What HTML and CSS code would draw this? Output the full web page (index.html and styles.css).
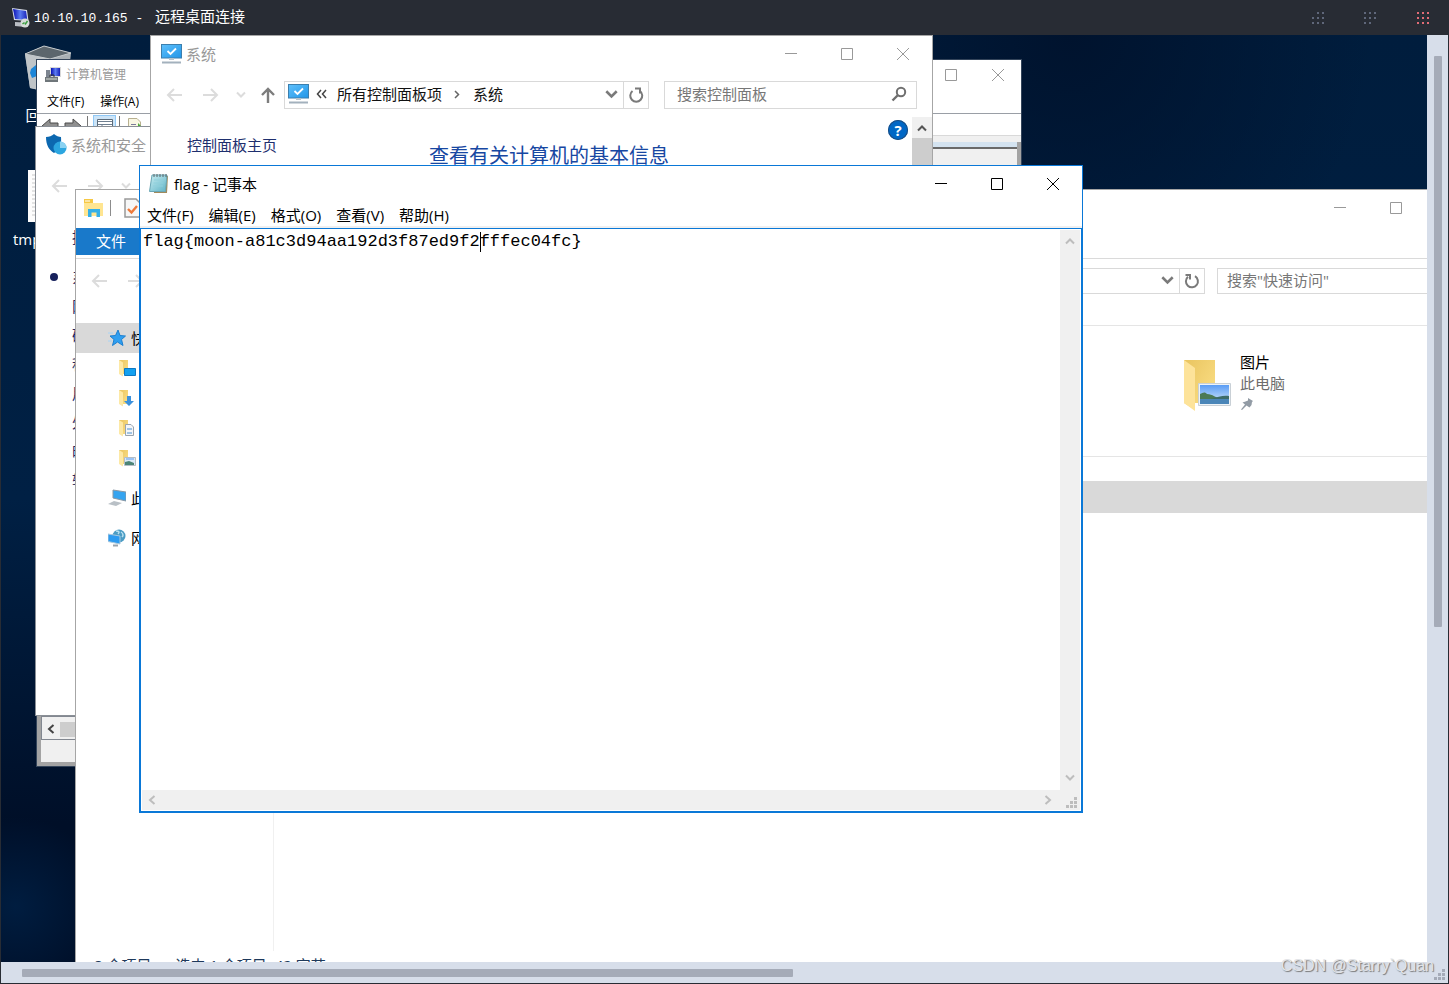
FILE: index.html
```html
<!DOCTYPE html>
<html lang="zh-CN">
<head>
<meta charset="utf-8">
<meta name="viewport" content="width=device-width, initial-scale=1">
<title>10.10.10.165 - 远程桌面连接</title>
<link rel="stylesheet" href="styles.css">
</head>
<body>
<svg class="sprite" aria-hidden="true">
  <defs>
    <linearGradient id="gScreen" x1="0" y1="0" x2="1" y2="1"><stop offset="0" stop-color="#5fc0fb"/><stop offset="1" stop-color="#2196e8"/></linearGradient>
    <linearGradient id="gFolder" x1="0" y1="0" x2="1" y2="1"><stop offset="0" stop-color="#e9c45f"/><stop offset="1" stop-color="#fde28a"/></linearGradient>
    <linearGradient id="gBlue" x1="0" y1="0" x2="1" y2="0"><stop offset="0" stop-color="#0a10b4"/><stop offset="0.5" stop-color="#5b7bf0"/><stop offset="1" stop-color="#1720b8"/></linearGradient>
    <linearGradient id="gPad" x1="0" y1="0" x2="1" y2="1"><stop offset="0" stop-color="#c9eef2"/><stop offset="1" stop-color="#5fb3c6"/></linearGradient>
    <linearGradient id="gSky" x1="0" y1="0" x2="0" y2="1"><stop offset="0" stop-color="#5a9cf5"/><stop offset="1" stop-color="#d8ecfb"/></linearGradient>
    <symbol id="min" viewBox="0 0 12 12"><path d="M0 5.500H12" stroke="currentColor"/></symbol>
    <symbol id="max" viewBox="0 0 12 12"><path d="M.5 .5H11.500V11.500H.5Z" fill="none" stroke="currentColor"/></symbol>
    <symbol id="close" viewBox="0 0 12 12"><path d="M0 0L12 12M12 0L0 12" stroke="currentColor"/></symbol>
    <symbol id="up" viewBox="0 0 10 10"><path d="M1 7.500L5 3.500L9 7.500" fill="none" stroke="currentColor" stroke-width="2"/></symbol>
    <symbol id="down" viewBox="0 0 10 10"><path d="M1 2.500L5 6.500L9 2.500" fill="none" stroke="currentColor" stroke-width="2"/></symbol>
    <symbol id="left" viewBox="0 0 10 10"><path d="M7.500 1L3 5L7.500 9" fill="none" stroke="currentColor" stroke-width="2"/></symbol>
    <symbol id="right" viewBox="0 0 10 10"><path d="M2.500 1L7 5L2.500 9" fill="none" stroke="currentColor" stroke-width="2"/></symbol>
    <symbol id="back" viewBox="0 0 16 16"><path d="M16 8H2M8 2L2 8L8 14" fill="none" stroke="currentColor" stroke-width="2"/></symbol>
    <symbol id="fwd" viewBox="0 0 16 16"><path d="M0 8H14M8 2L14 8L8 14" fill="none" stroke="currentColor" stroke-width="2"/></symbol>
    <symbol id="parent" viewBox="0 0 16 16"><path d="M8 16V2M2 8L8 2L14 8" fill="none" stroke="currentColor" stroke-width="2.400"/></symbol>
    <symbol id="reload" viewBox="0 0 16 16"><path d="M11 3.200A6 6 0 1 1 4 3.800" fill="none" stroke="currentColor" stroke-width="2"/><path d="M1.500 2H6V6.500" fill="none" stroke="currentColor" stroke-width="2"/></symbol>
    <symbol id="reload-cw" viewBox="0 0 16 16"><path d="M4.500 4A6 6 0 1 0 12 4" fill="none" stroke="currentColor" stroke-width="2"/><path d="M7 1.500H12V6.500" fill="none" stroke="currentColor" stroke-width="2"/></symbol>
    <symbol id="lens" viewBox="0 0 16 16"><circle cx="10" cy="6" r="4.200" fill="none" stroke="currentColor" stroke-width="2"/><path d="M7 9L1.500 14.500" stroke="currentColor" stroke-width="2.400"/></symbol>
    <symbol id="grip" viewBox="0 0 11 11"><path d="M8 0h3v3h-3zM4 4h3v3h-3zM8 4h3v3h-3zM0 8h3v3h-3zM4 8h3v3h-3zM8 8h3v3h-3z" fill="currentColor"/></symbol>
    <symbol id="monitor" viewBox="0 0 21 20"><rect x=".5" y=".5" width="20" height="13.500" fill="url(#gScreen)" stroke="#3c7fae"/><path d="M6.500 7L9.500 10L15 4.500" fill="none" stroke="#fff" stroke-width="1.800"/><path d="M8 14H13V16H8Z" fill="#b8c4cc"/><path d="M1 17.500H20V19.500H1Z" fill="#a3b1bd"/></symbol>
    <symbol id="folder" viewBox="0 0 18 18"><path d="M1 1H10V15H5L5 17L1 14.500Z" fill="url(#gFolder)"/><path d="M1 1L5 3.500V17.500L1 15Z" fill="#fde9a6"/></symbol>
  </defs>
</svg>

<div class="rdp">
  <header class="rdp-bar">
    <svg class="rdp-logo" viewBox="0 0 20 20"><path d="M2 0L17 2L18.500 13L4 12Z" fill="#d5dbe6"/><path d="M3 1L16 3L17.300 12L5 11Z" fill="url(#gBlue)"/><path d="M5 14L14 14.500L15 19L5 18Z" fill="#b9bdc4"/><circle cx="15" cy="15" r="4.500" fill="#d6dbd8"/><path d="M12.500 16L14.500 14.500M15 16.500L17.500 13" stroke="#3a9d3f" stroke-width="1.500"/></svg>
    <h1 class="rdp-title"><span class="rdp-host">10.10.10.165 - </span>远程桌面连接</h1>
    <div class="rdp-controls">
      <button class="rdp-btn" aria-label="最小化"><svg viewBox="0 0 12 12"><path d="M5 0h2v2H5zM10 0h2v2h-2zM0 5h2v2H0zM5 5h2v2H5zM10 5h2v2h-2zM0 10h2v2H0zM5 10h2v2H5zM10 10h2v2h-2z" fill="currentColor"/></svg></button>
      <button class="rdp-btn" aria-label="最大化"><svg viewBox="0 0 12 12"><path d="M0 0h2v2H0zM5 0h2v2H5zM10 0h2v2h-2zM0 5h2v2H0zM5 5h2v2H5zM10 5h2v2h-2zM0 10h2v2H0zM5 10h2v2H5z" fill="currentColor"/></svg></button>
      <button class="rdp-btn rdp-btn-close" aria-label="关闭"><svg viewBox="0 0 12 12"><path d="M0 0h2v2H0zM5 0h2v2H5zM10 0h2v2h-2zM0 5h2v2H0zM5 5h2v2H5zM10 5h2v2h-2zM0 10h2v2H0zM5 10h2v2H5zM10 10h2v2h-2z" fill="currentColor"/></svg></button>
    </div>
  </header>

  <main class="desktop">
    <div class="desk-icon desk-bin">
      <svg viewBox="0 0 48 48" width="48" height="48"><path d="M1 9L20 1L47 8L43 44L24 47L6 43Z" fill="#a9b0b5"/><path d="M1 9L20 1L47 8L26 14Z" fill="#5c666d" stroke="#c5cacd"/><path d="M1 9L26 14L24 47L6 43Z" fill="#c0c5c8"/><path d="M7 24L12 20L16 25L13 26V31L8 33L6 28Z" fill="#1c86d8"/></svg>
      <span class="desk-label">回收站</span>
    </div>
    <div class="desk-icon desk-tmp">
      <svg viewBox="0 0 40 52" width="40" height="52"><path d="M0 0H40V52H0Z" fill="#fdfdfd"/><path d="M4 5H36M4 9H36M4 13H36M4 17H36M4 21H36M4 25H36M4 29H36M4 33H36M4 37H36M4 41H36M4 45H36" stroke="#c9c9c9"/></svg>
      <span class="desk-label">tmp</span>
    </div>

    <section class="win manage" aria-label="计算机管理">
      <div class="titlebar manage-title">
        <svg viewBox="0 0 16 16" width="16" height="16"><rect x="5" y="0" width="11" height="10" fill="#d8d8d8"/><rect x="6" y="1" width="9" height="8" fill="url(#gBlue)"/><path d="M1 3H5V10H1Z" fill="#7d8590"/><path d="M0 10H13V15H0Z" fill="#6f767a"/><path d="M1 12H12" stroke="#d9dcd4"/><path d="M5 10V8H9V10" fill="none" stroke="#333"/></svg>
        <span class="title-text">计算机管理</span>
        <div class="controls">
          <button aria-label="最小化"><svg><use href="#min"/></svg></button>
          <button aria-label="最大化"><svg><use href="#max"/></svg></button>
          <button aria-label="关闭"><svg><use href="#close"/></svg></button>
        </div>
      </div>
      <div class="menubar manage-menu"><button>文件(F)</button><button>操作(A)</button></div>
      <div class="manage-tools">
        <svg viewBox="0 0 18 16" width="18" height="16"><path d="M1 8L9 1V5H17V11H9V15Z" fill="#8f8f8f" stroke="#4a4a4a"/></svg>
        <svg viewBox="0 0 18 16" width="18" height="16"><path d="M17 8L9 1V5H1V11H9V15Z" fill="#8f8f8f" stroke="#4a4a4a"/></svg>
        <i class="tool-sep"></i>
        <span class="tool-on"><svg viewBox="0 0 16 14" width="16" height="14"><path d="M.5 .5H15.500V13.500H.5Z" fill="#fff" stroke="#5c6a78"/><path d="M1 2.500H15M1 5.500H15" stroke="#6f7f90"/><path d="M5 6V13" stroke="#6f7f90"/></svg></span>
        <i class="tool-sep"></i>
        <svg class="tool-doc" viewBox="0 0 14 16" width="14" height="16"><path d="M.5 .5H9L12.500 4V15.500H.5Z" fill="#f9f7e3" stroke="#b8b090"/><path d="M3 6.500H8" stroke="#7b7b9b"/><path d="M10 5L14 9L10 13Z" fill="#4daa3c"/></svg>
        <i class="tool-sep"></i>
      </div>
      <div class="manage-frame">
        <div class="manage-pane"></div>
        <div class="manage-scroll"><svg class="chev"><use href="#left"/></svg><span class="manage-thumb"></span></div>
        <div class="manage-status"></div>
      </div>
    </section>

    <section class="win security" aria-label="系统和安全">
      <div class="titlebar">
        <svg viewBox="0 0 22 21" width="22" height="21"><path d="M8 0C10 2 13 3 15 3C16 12 12 17 8 19C3 16 0 11 0 3C3 3 6 2 8 0Z" fill="#0c68b0"/><circle cx="14" cy="14" r="6.500" fill="#2ca6e0"/><path d="M14 14V7.500A6.500 6.500 0 0 1 20.500 14Z" fill="#8ad2f2"/></svg>
        <span class="title-text">系统和安全</span>
      </div>
      <div class="navrow">
        <svg class="nav-arrow"><use href="#back"/></svg><svg class="nav-arrow"><use href="#fwd"/></svg><svg class="chev nav-more"><use href="#down"/></svg>
      </div>
      <div class="cats">
        <a class="cat-home" href="#">控制面板主页</a>
        <ul class="cat-list">
          <li class="cat-now"><a href="#">系统和安全</a></li>
          <li><a href="#">网络和 Internet</a></li>
          <li><a href="#">硬件和声音</a></li>
          <li><a href="#">程序</a></li>
          <li><a href="#">用户帐户</a></li>
          <li><a href="#">外观</a></li>
          <li><a href="#">时钟、语言和区域</a></li>
          <li><a href="#">轻松使用</a></li>
        </ul>
      </div>
    </section>

    <section class="win system" aria-label="系统">
      <div class="titlebar">
        <svg width="21" height="20"><use href="#monitor"/></svg>
        <span class="title-text">系统</span>
        <div class="controls">
          <button aria-label="最小化"><svg><use href="#min"/></svg></button>
          <button aria-label="最大化"><svg><use href="#max"/></svg></button>
          <button aria-label="关闭"><svg><use href="#close"/></svg></button>
        </div>
      </div>
      <div class="navrow">
        <svg class="nav-arrow"><use href="#back"/></svg><svg class="nav-arrow"><use href="#fwd"/></svg><svg class="chev nav-more"><use href="#down"/></svg><svg class="nav-arrow nav-up"><use href="#parent"/></svg>
        <div class="address">
          <svg width="21" height="20"><use href="#monitor"/></svg>
          <svg viewBox="0 0 12 10" width="12" height="10"><path d="M5 1L1.500 5L5 9M10 1L6.500 5L10 9" fill="none" stroke="#444" stroke-width="1.500"/></svg>
          <a href="#">所有控制面板项</a>
          <svg viewBox="0 0 6 10" width="6" height="10"><path d="M1 2L4.500 5.500L1 9" fill="none" stroke="#666" stroke-width="1.500"/></svg>
          <a href="#">系统</a>
          <button class="addr-drop" aria-label="历史记录"><svg><use href="#down"/></svg></button>
          <button class="addr-reload" aria-label="刷新"><svg><use href="#reload-cw"/></svg></button>
        </div>
        <label class="search"><input type="text" aria-label="搜索控制面板" placeholder="搜索控制面板"><svg><use href="#lens"/></svg></label>
      </div>
      <div class="system-body">
        <a class="system-home" href="#">控制面板主页</a>
        <h2 class="system-heading">查看有关计算机的基本信息</h2>
        <button class="help" aria-label="帮助">?</button>
        <div class="system-scroll"><svg class="chev"><use href="#up"/></svg><span class="system-thumb"></span></div>
      </div>
    </section>

    <section class="win explorer" aria-label="快速访问">
      <div class="titlebar">
        <svg viewBox="0 0 20 18" width="20" height="18"><path d="M0 1H9V4H19V17H0Z" fill="#ffe591"/><path d="M0 0H9V4H0Z" fill="#f6c844"/><path d="M1 2H6" stroke="#fff"/><path d="M4 18V10H16V18H12.500V13.500H7.500V18Z" fill="#35b0e8"/></svg>
        <i class="quick-sep"></i>
        <svg viewBox="0 0 17 20" width="17" height="20"><path d="M1 1H12L16 5V19H1Z" fill="#f7f7f7" stroke="#999" stroke-width="1.500"/><path d="M4 11L7.500 14.500L13 8" fill="none" stroke="#ee7a3b" stroke-width="2.400"/></svg>
        <div class="controls">
          <button aria-label="最小化"><svg><use href="#min"/></svg></button>
          <button aria-label="最大化"><svg><use href="#max"/></svg></button>
          <button aria-label="关闭"><svg><use href="#close"/></svg></button>
        </div>
      </div>
      <div class="ribbon"><button class="ribbon-file">文件</button></div>
      <div class="navrow">
        <svg class="nav-arrow"><use href="#back"/></svg><svg class="nav-arrow"><use href="#fwd"/></svg>
        <div class="address">
          <button class="addr-drop" aria-label="历史记录"><svg><use href="#down"/></svg></button>
          <button class="addr-reload" aria-label="刷新"><svg><use href="#reload"/></svg></button>
        </div>
        <label class="search"><input type="text" aria-label="搜索快速访问" placeholder='搜索"快速访问"'></label>
      </div>
      <div class="explorer-body">
        <nav class="tree">
          <a class="tree-item tree-on" href="#"><svg viewBox="0 0 18 18"><path d="M10 1L12 6.500L17.500 7L13.500 10.500L15 16.500L9.500 13L4.500 16.500L6 10.500L2 7L7.500 6.500Z" fill="#2f9ff0" stroke="#1c7fd0"/><path d="M0 4H5M0 12H4" stroke="#a8d4f5"/></svg>快速访问</a>
          <a class="tree-item tree-sub" href="#"><svg viewBox="0 0 18 18"><use href="#folder" width="18" height="18"/><path d="M6.500 9.500H17.500V16.500H6.500Z" fill="#12a0f0" stroke="#0b78c4"/></svg>桌面</a>
          <a class="tree-item tree-sub" href="#"><svg viewBox="0 0 18 18"><use href="#folder" width="18" height="18"/><path d="M9 7H13V12H16L11 17L6 12H9Z" fill="#3c91dc"/></svg>下载</a>
          <a class="tree-item tree-sub" href="#"><svg viewBox="0 0 18 18"><use href="#folder" width="18" height="18"/><path d="M7.500 5.500H13L15.500 8V16.500H7.500Z" fill="#f4f6f8" stroke="#9aa4ae"/><path d="M9 10H14M9 14H14" stroke="#4a90d0"/></svg>文档</a>
          <a class="tree-item tree-sub" href="#"><svg viewBox="0 0 18 18"><use href="#folder" width="18" height="18"/><path d="M6.500 8.500H17.500V16.500H6.500Z" fill="#dcebf7" stroke="#b5bec6"/><path d="M8 10H16" stroke="#5a9cf5"/><path d="M7 13L11 12L16 14V16H7Z" fill="#4d8577"/></svg>图片</a>
          <a class="tree-item tree-root" href="#"><svg viewBox="0 0 18 18"><path d="M5 1L18 3V12L5 9Z" fill="#35a4f0" stroke="#8a98a4"/><path d="M0 15L6 12L14 14L8 17Z" fill="#b9c0c6"/></svg>此电脑</a>
          <a class="tree-item tree-root" href="#"><svg viewBox="0 0 18 18"><circle cx="11" cy="7" r="6.500" fill="#4b9cc4"/><path d="M8 2C11 2 12 3 10 5M13 3C16 5 15 7 14 8" stroke="#b8e0f0" fill="none" stroke-width="1.500"/><path d="M0 5L12 7V15L0 12.500Z" fill="#2c9bf0" stroke="#a9c8dd"/><path d="M5 16.500H10" stroke="#9aa4ad" stroke-width="2"/></svg>网络</a>
        </nav>
        <div class="files">
          <div class="group-head"></div>
          <div class="tiles">
            <a class="tile" href="#">
              <svg viewBox="0 0 48 52" width="48" height="52"><path d="M1 1H32V44H12V51L1 44Z" fill="url(#gFolder)"/><path d="M1 1L12 9V52L1 44Z" fill="#fde39a"/><path d="M15.500 24.500H47.500V46.500H15.500Z" fill="#eef3f7" stroke="#c9d0d6"/><path d="M17 26H46V45H17Z" fill="url(#gSky)"/><path d="M17 35C20 34 21 32 24 35C30 35 32 39 40 40H17Z" fill="#4b7a55"/><path d="M28 40C35 38 40 36 46 37V41H28Z" fill="#3d6c6a"/><path d="M17 40H46V45H17Z" fill="#4b86b8"/></svg>
              <span class="tile-text"><span class="tile-name">图片</span><span class="tile-sub">此电脑</span>
              <svg viewBox="0 0 14 14" width="14" height="14"><path d="M8 1L13 4L12 5L11.500 8L9.500 10.500L6.500 8.500L2 13L1 12.500L5 7.500L2.500 5.500L5.500 4.500L8 3.500Z" fill="#929ba5"/></svg></span>
            </a>
          </div>
          <div class="recent-head"></div>
          <div class="recent-row"></div>
        </div>
      </div>
      <div class="status"><span>8 个项目</span><span>选中 1 个项目&nbsp; 42 字节</span></div>
    </section>

    <section class="win notepad" aria-label="flag - 记事本">
      <div class="titlebar">
        <svg viewBox="0 0 20 21" width="20" height="21"><path d="M4 3H19L18 20H5Z" fill="#a18a5c"/><path d="M3 2H18L16.500 18.500H.5Z" fill="url(#gPad)" stroke="#6aa6b4"/><path d="M5 1V4M8 1V4M11 1V4M14 1V4M17 1V4" stroke="#5b6468"/><path d="M5 7H15M4.500 10H14.500M4 13H14" stroke="#8fd0dc"/></svg>
        <span class="title-text">flag - 记事本</span>
        <div class="controls">
          <button aria-label="最小化"><svg><use href="#min"/></svg></button>
          <button aria-label="最大化"><svg><use href="#max"/></svg></button>
          <button aria-label="关闭"><svg><use href="#close"/></svg></button>
        </div>
      </div>
      <div class="menubar"><button>文件(F)</button><button>编辑(E)</button><button>格式(O)</button><button>查看(V)</button><button>帮助(H)</button></div>
      <div class="editor">
        <div class="sheet"><textarea aria-label="文本" spellcheck="false">flag{moon-a81c3d94aa192d3f87ed9f2fffec04fc}</textarea><i class="caret"></i></div>
        <div class="vbar"><svg class="chev"><use href="#up"/></svg><svg class="chev"><use href="#down"/></svg></div>
        <div class="hbar"><svg class="chev"><use href="#left"/></svg><svg class="chev"><use href="#right"/></svg></div>
        <div class="corner"><svg><use href="#grip"/></svg></div>
      </div>
    </section>
  </main>

  <div class="rdp-vbar"><span class="rdp-vthumb"></span></div>
  <div class="rdp-hbar"><span class="rdp-hthumb"></span></div>
  <div class="rdp-corner"><svg><use href="#grip"/></svg></div>
  <div class="watermark">CSDN @Starry`Quan</div>
</div>
</body>
</html>
```
FILE: styles.css
```css
* { box-sizing: border-box; }
html, body { height: 100%; }
body {
  margin: 0;
  font: 15px/20px "Open Sans", "Noto Sans CJK SC", sans-serif;
  color: #000;
}
button, input, textarea { font: inherit; color: inherit; margin: 0; padding: 0; border: 0; background: none; }
a { color: inherit; text-decoration: none; }
svg { display: block; flex: none; }
.sprite { position: absolute; width: 0; height: 0; }

/* Remote desktop frame */
.rdp {
  position: relative;
  height: 100vh;
  display: grid;
  grid-template: 35px minmax(0, 1fr) 21px / minmax(0, 1fr) 21px;
  padding: 0 1px 1px;
  background: #282c34;
  overflow: hidden;
}
.rdp-bar { grid-column: 1 / 3; display: flex; align-items: center; padding: 0 11px 0 9px; color: #fff; }
.rdp-logo { width: 20px; height: 20px; margin-right: 4px; }
.rdp-title { margin: 0; font: 15px/20px "Noto Sans CJK SC", sans-serif; white-space: pre; }
.rdp-host { margin-right: 4px; font: 13px/20px "Liberation Mono", monospace; }
.rdp-controls { display: flex; margin-left: auto; }
.rdp-btn { width: 52px; height: 35px; display: grid; place-items: center; color: #5f677a; }
.rdp-btn:last-child { width: 28px; margin-left: 13px; }
.rdp-btn svg { width: 12px; height: 12px; }
.rdp-btn-close { color: #e06c75; }
.rdp-vbar, .rdp-hbar, .rdp-corner { background: #d7deea; display: flex; }
.rdp-vbar { grid-area: 2 / 2; flex-direction: column; align-items: center; padding-top: 21px; }
.rdp-vbar::after { content: ""; flex: 335; }
.rdp-vthumb { flex: 571; width: 8px; border-radius: 1px; background: #a5abb8; }
.rdp-hbar { grid-area: 3 / 1; align-items: center; padding-left: 21px; }
.rdp-hbar::after { content: ""; flex: 634; }
.rdp-hthumb { flex: 771; height: 8px; border-radius: 1px; background: #a5abb8; }
.rdp-corner { grid-area: 3 / 2; align-items: flex-end; justify-content: flex-end; padding: 3px; color: #a5abb8; }
.rdp-corner svg { width: 11px; height: 11px; }
.watermark {
  position: absolute;
  right: 15px;
  bottom: 8px;
  font: 16px/20px "Liberation Sans", sans-serif;
  color: #e2e4e8;
  text-shadow: 1px 1px 1px #777;
}

/* Desktop */
.desktop {
  position: relative;
  overflow: hidden;
  background:
    radial-gradient(circle at 15px 94%, #001d40 0, transparent 90px),
    radial-gradient(circle at 75% 0, #00132e 0, transparent 300px),
    linear-gradient(#001d3d, #002044 50%, #000f28 85%);
}
.desk-icon { position: absolute; color: #fff; display: flex; flex-direction: column; align-items: center; }
.desk-bin { left: 23px; top: 10px; gap: 12px; }
.desk-tmp { left: 12px; top: 135px; align-items: flex-start; gap: 7px; }
.desk-tmp svg { margin-left: 15px; }

/* Windows */
.win { position: absolute; display: flex; flex-direction: column; background: #fff; border: 1px solid #a6a6a6; }
.titlebar { flex: none; display: flex; align-items: center; height: 37px; padding: 0 1px 2px 9px; color: #999; }
.title-text { margin-left: 5px; white-space: nowrap; }
.controls { display: flex; align-self: stretch; margin-left: auto; }
.controls button { width: 56px; display: grid; place-items: center; }
.controls svg { width: 12px; height: 12px; }
.menubar { display: flex; align-items: center; gap: 15px; white-space: nowrap; }
.chev { width: 10px; height: 10px; }
.navrow { flex: none; display: flex; align-items: center; height: 43px; padding-left: 15px; color: #dcdcdc; }
.nav-arrow { width: 16px; height: 16px; margin-right: 21px; }
.nav-more { margin: 0 14px 0 -4px; }
.nav-up { color: #7d7d7d; margin-right: 8px; }
.address { display: flex; align-items: center; flex: 1; height: 28px; padding: 0 0 2px 3px; border: 1px solid #d9d9d9; color: #111; white-space: nowrap; }
.address button { display: grid; place-items: center; align-self: stretch; width: 25px; margin-bottom: -2px; color: #7a7a7a; }
.address .addr-drop { margin-left: auto; width: 24px; }
.address .addr-drop svg { width: 13px; height: 13px; }
.address .addr-reload { border-left: 1px solid #d9d9d9; }
.address .addr-reload svg { width: 16px; height: 16px; }
.search { display: flex; align-items: center; height: 28px; padding: 0 9px 2px; border: 1px solid #d9d9d9; color: #6f6f6f; }
.search input { flex: 1; min-width: 0; outline: 0; }
.search input::placeholder { color: #777; opacity: 1; }
.search svg { width: 16px; height: 16px; }

/* Computer management */
.manage { left: 35px; right: 405px; top: 24px; bottom: 195px; border-color: #33445a; font-size: 12px; }
.manage-title { height: 29px; padding: 0 0 0 8px; }
.manage .controls button { width: 47px; }
.manage-menu { flex: none; height: 24px; padding: 2px 0 0 10px; gap: 16px; }
.manage-tools { flex: none; display: flex; align-items: center; gap: 5px; height: 23px; padding: 2px 0 0 4px; border-top: 1px solid #9a9fa6; border-bottom: 1px solid #d9d9d9; }
.tool-sep { width: 1px; height: 20px; background: #777; }
.tool-on { display: grid; place-items: center; width: 23px; height: 21px; margin-right: -2px; background: #cce4f7; border: 1px solid #90c8f6; }
.tool-doc { margin: 0 3px; }
.manage-frame { flex: 1; display: flex; flex-direction: column; margin-top: 6px; padding: 0 4px 4px; background: #a3a3a3; outline: 6px solid #f0f0f0; outline-offset: 0; clip-path: inset(-6px 0 0); }
.manage-pane { flex: 1; background: #f0f0f0; border-top: 5px solid #d4e3f0; box-shadow: inset 0 2px #6a6a6a; }
.manage-scroll { display: flex; align-items: center; height: 24px; padding: 2px 0 0 4px; gap: 4px; background: #f0f0f0; border: 1px solid #828790; color: #444; }
.manage-thumb { width: 200px; height: 15px; background: #cdcdcd; }
.manage-status { height: 22px; background: #f0f0f0; }

/* System and security */
.security { left: 34px; right: 600px; top: 91px; bottom: 246px; border-color: #8a8f96; }
.security .titlebar { padding-left: 10px; }
.security .title-text { margin-left: 3px; }
.cats { padding: 20px 0 0 36px; color: #25285f; }
.cat-home { display: block; }
.cat-list { margin: 16px 0 0; padding: 0; list-style: none; line-height: 29px; }
.cat-now::before { content: ""; float: left; width: 8px; height: 8px; margin: 10px 0 0 -22px; border-radius: 50%; background: #17215c; }

/* System */
.system { left: 149px; right: 494px; top: 0; bottom: 200px; }
.system .titlebar { padding-left: 10px; }
.system .title-text { margin-left: 4px; }
.system .address svg { margin-right: 7px; }
.system .address a { margin-right: 12px; }
.system .address button svg { margin: 0; }
.system .address > svg:nth-of-type(2) { margin-right: 9px; }
.system .address > svg:nth-of-type(3) { margin-right: 13px; }
.system .search { width: 253px; margin: 0 15px; padding-left: 12px; }
.system-body { flex: 1; display: flex; align-items: flex-start; padding: 1px 0 0 36px; }
.system-home { margin-top: 18px; color: #1e2f6e; }
.system-heading { margin: 25px auto 0 152px; font-size: 20px; line-height: 28px; font-weight: 400; color: #1747a2; white-space: nowrap; }
.help { width: 20px; height: 20px; margin: 3px 4px 0 0; border-radius: 50%; background: #0067c5; box-shadow: inset 0 0 0 1px #1d4d80; color: #fff; font-weight: 700; line-height: 20px; }
.system-scroll { align-self: stretch; display: flex; flex-direction: column; align-items: center; width: 20px; padding-top: 6px; gap: 5px; background: #f0f0f0; color: #555; }
.system-thumb { width: 20px; height: 200px; background: #cdcdcd; }

/* File explorer */
.explorer { left: 74px; right: -54px; top: 154px; bottom: -17px; }
.explorer .titlebar { height: 38px; padding: 0 0 2px 8px; }
.quick-sep { width: 1px; height: 16px; margin: 0 13px 0 6px; background: #8c8c8c; }
.ribbon { flex: none; display: flex; align-items: flex-start; height: 31px; border-bottom: 1px solid #dadada; }
.ribbon-file { width: 70px; height: 27px; padding-bottom: 2px; background: #1979ca; color: #fff; }
.explorer .address { height: 26px; }
.explorer .search { width: 253px; height: 26px; margin: 0 10px 0 12px; }
.explorer-body { flex: 1; min-height: 0; display: flex; }
.tree { width: 198px; padding-top: 21px; border-right: 1px solid #f0f0f0; }
.tree-item { display: flex; align-items: center; gap: 5px; height: 30px; padding-left: 32px; }
.tree-item svg { width: 18px; height: 18px; }
.tree-on { background: #d9d9d9; }
.tree-sub { padding-left: 42px; }
.tree-root { margin-top: 10px; }
.files { flex: 1; min-width: 0; }
.group-head { height: 24px; border-bottom: 1px solid #e5e5e5; }
.tiles { display: flex; justify-content: flex-end; height: 131px; padding: 26px 195px 0 0; border-bottom: 1px solid #e5e5e5; }
.tile { display: flex; gap: 9px; align-items: flex-end; align-self: flex-start; line-height: 21px; }
.tile-text { display: flex; flex-direction: column; }
.tile-text svg { margin-top: 3px; }
.tile-sub { color: #6d6d6d; }
.recent-head { height: 24px; }
.recent-row { height: 32px; background: #d9d9d9; }
.status { flex: none; display: flex; align-items: center; gap: 24px; height: 27px; padding-left: 18px; color: #1e395b; }

/* Notepad */
.notepad { left: 138px; right: 344px; top: 130px; bottom: 149px; border-color: #0a78d7; }
.notepad .titlebar { color: #000; }
.notepad .menubar { flex: none; height: 25px; padding-left: 7px; border-bottom: 2px solid #f0f0f0; }
.editor { flex: 1; display: grid; grid-template: minmax(0, 1fr) 20px / minmax(0, 1fr) 20px; padding: 1px; border: 1px solid #0a78d7; background: #fff; }
.sheet { position: relative; font: 17px/24px "Liberation Mono", "Noto Sans CJK SC", monospace; }
.sheet textarea { display: block; width: 100%; height: 100%; padding: 0 1px; resize: none; outline: 0; overflow: hidden; }
.caret { position: absolute; left: calc(1px + 33ch); top: 2px; width: 1px; height: 20px; background: #000; }
.vbar, .hbar { display: flex; align-items: center; justify-content: space-between; background: #f0f0f0; color: #bdbdbd; }
.vbar { flex-direction: column; padding: 6px 0 7px; }
.hbar { padding: 0 7px 0 5px; }
.corner { display: flex; align-items: flex-end; justify-content: flex-end; padding: 2px 3px; background: #f0f0f0; color: #bdbdbd; }
.corner svg { width: 11px; height: 11px; }
```
